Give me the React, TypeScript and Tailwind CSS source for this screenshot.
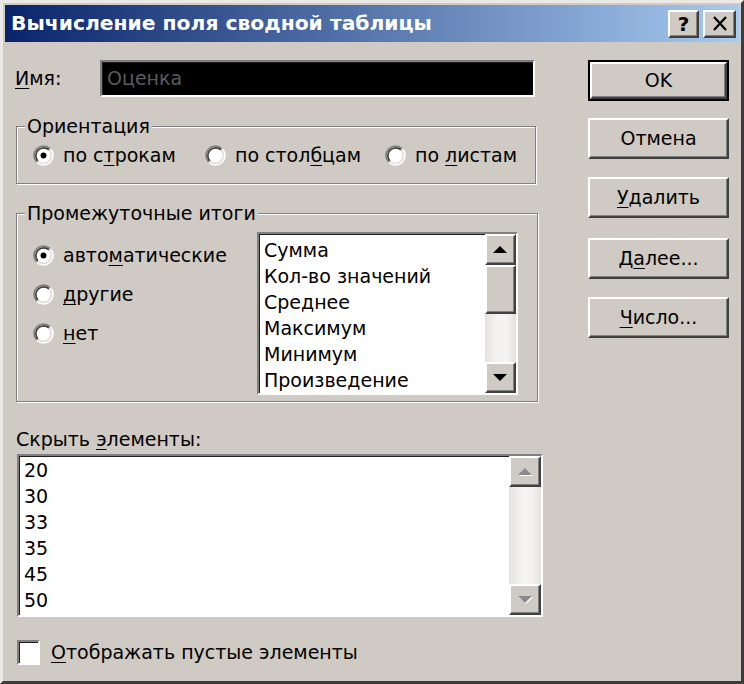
import React from "react";

// ─── Classic Win2000 bevels ───────────────────────────────────────────────────

const raised =
  "border-2 border-t-white border-l-white border-r-[#404040] border-b-[#404040] shadow-[inset_-1px_-1px_0_#808080]";
const sunken =
  "border-2 border-t-[#808080] border-l-[#808080] border-r-white border-b-white shadow-[inset_1px_1px_0_#202020]";
const groupBox =
  "relative border border-[#808080] shadow-[1px_1px_0_#ffffff,inset_1px_1px_0_#ffffff]";
const font = { fontFamily: '"DejaVu Sans", "Noto Sans", sans-serif' };

function Radio({ checked = false }: { checked?: boolean }) {
  return (
    <svg width="21" height="21" viewBox="0 0 20 20" className="flex-none">
      <circle cx="10" cy="10" r="8" fill="#ffffff" />
      <path d="M3.6 16.4 A9 9 0 0 1 16.4 3.6" stroke="#808080" strokeWidth="1.6" fill="none" />
      <path d="M4.7 15.3 A7.5 7.5 0 0 1 15.3 4.7" stroke="#404040" strokeWidth="1.6" fill="none" />
      <path d="M16.4 3.6 A9 9 0 0 1 3.6 16.4" stroke="#ffffff" strokeWidth="1.6" fill="none" />
      <path d="M15.3 4.7 A7.5 7.5 0 0 1 4.7 15.3" stroke="#e4e2de" strokeWidth="1.6" fill="none" />
      {checked && <circle cx="10" cy="10" r="2.8" fill="#000000" />}
    </svg>
  );
}

function Arrow({ dir, disabled = false }: { dir: "up" | "down"; disabled?: boolean }) {
  const d = dir === "up" ? "M1 9 L8 2 L15 9 Z" : "M1 2 L8 9 L15 2 Z";
  if (disabled) {
    return (
      <svg width="17" height="12" viewBox="0 0 17 12">
        <path d={d} transform="translate(1 1)" fill="#ffffff" />
        <path d={d} fill="#8a8a8a" />
      </svg>
    );
  }
  return (
    <svg width="17" height="12" viewBox="0 0 17 12">
      <path d={d} fill="#000000" />
    </svg>
  );
}

function Scrollbar({ disabled = false, w }: { disabled?: boolean; w: string }) {
  return (
    <div className={`${w} flex-none flex flex-col h-full bg-[#eeedeb]`}>
      <div className={`${raised} h-[31px] flex-none bg-[#cfcac3] flex items-center justify-center`}>
        <Arrow dir="up" disabled={disabled} />
      </div>
      {!disabled && <div className={`${raised} h-[49px] flex-none bg-[#cfcac3]`} />}
      <div className="flex-1 bg-[linear-gradient(90deg,#e4e2de,#f4f3f1_40%,#f4f3f1_70%,#e4e2de)]" />
      <div className={`${raised} h-[31px] flex-none bg-[#cfcac3] flex items-center justify-center`}>
        <Arrow dir="down" disabled={disabled} />
      </div>
    </div>
  );
}

function Btn({ children, def = false, mt }: { children: React.ReactNode; def?: boolean; mt: string }) {
  const inner = (
    <div className={`${raised} h-full w-full flex items-center justify-center text-[19px] text-black`}>
      {children}
    </div>
  );
  return (
    <div className={`${mt} w-[141px] h-[41px] flex-none ${def ? "border-2 border-black" : ""}`}>{inner}</div>
  );
}

const subtotals = ["Сумма", "Кол-во значений", "Среднее", "Максимум", "Минимум", "Произведение"];
const hidden = ["20", "30", "33", "35", "45", "50"];

export default function App() {
  return (
    <div
      style={font}
      className="w-[744px] h-[684px] bg-[#cfcac3] border-[3px] border-t-[#ebe9e5] border-l-[#ebe9e5] border-r-[#3c3c3c] border-b-[#3c3c3c] p-[2px] flex flex-col overflow-hidden text-black"
    >
      {/* Title bar */}
      <div className="h-[37px] flex-none flex items-center pl-[6px] pr-[3px] bg-[linear-gradient(90deg,#0a246a,#a6caf0)]">
        <span className="flex-1 text-white font-bold text-[20.3px]">
          Вычисление поля сводной таблицы
        </span>
        <div className={`${raised} w-[31px] h-[28px] bg-[#cfcac3] flex items-center justify-center font-bold text-[20px] leading-none`}>
          ?
        </div>
        <div className={`${raised} ml-[4px] w-[33px] h-[28px] bg-[#cfcac3] flex items-center justify-center`}>
          <svg width="16" height="15" viewBox="0 0 16 15">
            <path d="M2 1 L14 14 M14 1 L2 14" stroke="#000" strokeWidth="2.2" />
          </svg>
        </div>
      </div>

      {/* Body */}
      <div className="flex-1 flex pl-[11px]">
        {/* Left column */}
        <div className="w-[527px] flex-none flex flex-col">
          <div className="mt-[18px] flex items-center">
            <span className="w-[85px] flex-none text-[19px] -ml-[1px]">
              <span className="underline underline-offset-[3px]">И</span>мя:
            </span>
            <div className={`${sunken} w-[435px] h-[37px] bg-black flex items-center pl-[5px] text-[19px] text-[#5c5c5c]`}>
              Оценка
            </div>
          </div>

          {/* Orientation */}
          <div className={`${groupBox} mt-[29px] w-[520px] h-[58px] flex items-center pl-[16px] text-[19px]`}>
            <span className="absolute -top-[13px] left-[8px] px-[2px] bg-[#cfcac3] leading-[24px]">Ориентация</span>
            <div className="w-[172px] flex items-center gap-[9px]">
              <Radio checked />
              <span>
                по с<span className="underline underline-offset-[3px]">т</span>рокам
              </span>
            </div>
            <div className="w-[180px] flex items-center gap-[9px]">
              <Radio />
              <span>
                по стол<span className="underline underline-offset-[3px]">б</span>цам
              </span>
            </div>
            <div className="flex items-center gap-[9px]">
              <Radio />
              <span>
                по <span className="underline underline-offset-[3px]">л</span>истам
              </span>
            </div>
          </div>

          {/* Subtotals */}
          <div className={`${groupBox} mt-[29px] w-[522px] h-[189px] flex items-start pl-[16px] text-[19px]`}>
            <span className="absolute -top-[13px] left-[8px] px-[2px] bg-[#cfcac3] leading-[24px]">
              Промежуточные итоги
            </span>
            <div className="w-[224px] flex-none pt-[28px] flex flex-col gap-[13px]">
              <div className="h-[26px] flex items-center gap-[9px]">
                <Radio checked />
                <span>
                  авто<span className="underline underline-offset-[3px]">м</span>атические
                </span>
              </div>
              <div className="h-[26px] flex items-center gap-[9px]">
                <Radio />
                <span>
                  <span className="underline underline-offset-[3px]">д</span>ругие
                </span>
              </div>
              <div className="h-[26px] flex items-center gap-[9px]">
                <Radio />
                <span>
                  <span className="underline underline-offset-[3px]">н</span>ет
                </span>
              </div>
            </div>
            <div className={`${sunken} mt-[18px] w-[261px] h-[163px] bg-white flex`}>
              <div className="flex-1 pl-[5px] pt-[3px] overflow-hidden">
                {subtotals.map((s) => (
                  <div key={s} className="h-[26px] leading-[26px] whitespace-nowrap">
                    {s}
                  </div>
                ))}
              </div>
              <Scrollbar w="w-[31px]" />
            </div>
          </div>

          {/* Hidden items */}
          <div className="mt-[25px] h-[24px] leading-[24px] text-[19px]">
            Скрыть <span className="underline underline-offset-[3px]">э</span>лементы:
          </div>
          <div className={`${sunken} mt-[3px] ml-[1px] w-[526px] h-[163px] bg-white flex text-[19px]`}>
            <div className="flex-1 pl-[5px] pt-[1px] overflow-hidden">
              {hidden.map((s) => (
                <div key={s} className="h-[26px] leading-[26px]">
                  {s}
                </div>
              ))}
            </div>
            <Scrollbar w="w-[32px]" disabled />
          </div>

          <div className="mt-[21px] ml-[1px] flex items-center gap-[11px] text-[19px]">
            <div className={`${sunken} w-[23px] h-[25px] bg-white flex-none`} />
            <span>
              <span className="underline underline-offset-[3px]">О</span>тображать пустые элементы
            </span>
          </div>
        </div>

        {/* Right column */}
        <div className="ml-[45px] flex flex-col">
          <Btn def mt="mt-[18px]">OK</Btn>
          <Btn mt="mt-[17px]">Отмена</Btn>
          <Btn mt="mt-[18px]">
            <span>
              <span className="underline underline-offset-[3px]">У</span>далить
            </span>
          </Btn>
          <Btn mt="mt-[20px]">
            <span>
              Д<span className="underline underline-offset-[3px]">а</span>лее...
            </span>
          </Btn>
          <Btn mt="mt-[18px]">
            <span>
              <span className="underline underline-offset-[3px]">Ч</span>исло...
            </span>
          </Btn>
        </div>
      </div>
    </div>
  );
}
